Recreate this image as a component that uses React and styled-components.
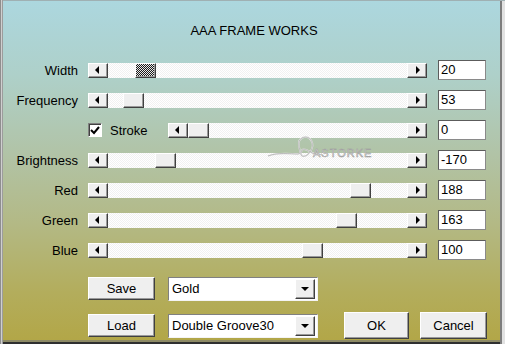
import React from "react";
import styled, { createGlobalStyle } from "styled-components";

const GlobalStyle = createGlobalStyle`
  html, body { margin: 0; padding: 0; }
  body {
    width: 505px;
    height: 344px;
    overflow: hidden;
    font-family: "Liberation Sans", Arial, sans-serif;
  }
`;

const Frame = styled.div`
  position: relative;
  box-sizing: border-box;
  width: 505px;
  height: 344px;
  padding: 1px 0 0 3px;
  font-size: 13px;
  color: #000;
  background: linear-gradient(
    180deg,
    #acd7df 0%,
    #aed0c9 22%,
    #b1c3a6 45%,
    #b3b985 65%,
    #b3ad5c 85%,
    #b2a646 100%
  );
  box-shadow: inset 1px 0 0 #8e8e8e, inset 2px 0 0 #cfcfcf, inset 3px 0 0 #9c9c9c,
    inset 0 1px 0 #9fb0b3, inset -3px 0 0 #e2e2e2, inset -5px 0 0 #7d7d7d,
    inset 0 -2px 0 #2f2f2f, inset 0 -4px 0 #8d8a66;
`;

const Title = styled.div`
  height: 54px;
  box-sizing: border-box;
  padding-top: 22px;
  line-height: 15px;
  text-align: center;
`;

const Row = styled.div`
  display: flex;
  align-items: center;
  height: 30px;
`;

const Label = styled.div`
  width: 75px;
  margin-right: 10px;
  text-align: right;
  line-height: 15px;
`;

const raised = `
  box-sizing: border-box;
  background: #efefef;
  border-top: 1px solid #ffffff;
  border-left: 1px solid #ffffff;
  border-right: 1px solid #404040;
  border-bottom: 1px solid #404040;
  box-shadow: inset -1px -1px 0 #9a9a9a;
`;

const SliderBox = styled.div`
  position: relative;
  display: flex;
  width: ${(p) => p.$width}px;
  height: 15px;
`;

const ArrowButton = styled.div`
  ${raised}
  width: 20px;
  height: 15px;
  display: flex;
  align-items: center;
  justify-content: center;

  &::before {
    content: "";
    width: 0;
    height: 0;
    border-top: 4px solid transparent;
    border-bottom: 4px solid transparent;
    ${(p) =>
      p.$dir === "left"
        ? "border-right: 4px solid #000; margin-right: 2px;"
        : "border-left: 4px solid #000; margin-left: 2px;"}
  }
`;

const Track = styled.div`
  flex: 1;
  height: 15px;
  background: repeating-conic-gradient(#f1f1f1 0 25%, #ffffff 0 50%) 0 0 / 2px 2px;
`;

const Thumb = styled.div`
  ${raised}
  position: absolute;
  top: 0;
  width: 21px;
  height: 15px;
  ${(p) =>
    p.$focus &&
    `background: repeating-conic-gradient(#1a1a1a 0 25%, #e8e8e8 0 50%) 0 0 / 2px 2px;`}
`;

const ValueBox = styled.div`
  box-sizing: border-box;
  width: 48px;
  height: 20px;
  margin-left: 11px;
  padding-left: 2px;
  background: #fff;
  border: 1px solid #5c5c5c;
  border-right-color: #8a8a8a;
  border-bottom-color: #8a8a8a;
  line-height: 18px;
`;

const StrokeCell = styled.div`
  display: flex;
  align-items: center;
  width: 339px;
`;

const Check = styled.div`
  box-sizing: border-box;
  width: 14px;
  height: 14px;
  background: #fff;
  border-top: 1px solid #808080;
  border-left: 1px solid #808080;
  border-right: 1px solid #ffffff;
  border-bottom: 1px solid #ffffff;
  box-shadow: inset 1px 1px 0 #404040;
  display: flex;
  align-items: center;
  justify-content: center;
`;

const CheckText = styled.span`
  margin-left: 8px;
  line-height: 15px;
`;

const Push = styled.div`
  margin-left: auto;
`;

/* columns: Save/Load | gap | combo | gap | OK | gap | Cancel */
const Bottom = styled.div`
  display: grid;
  grid-template-columns: 67px 13px 150px 26px 65px 11px 67px;
  grid-template-rows: 25px 27px;
  row-gap: 11px;
  align-items: center;
  margin-top: 11px;
  padding-left: 85px;
`;

const Button = styled.div`
  ${raised}
  grid-column: ${(p) => p.$col};
  grid-row: ${(p) => p.$row};
  height: ${(p) => p.$h}px;
  display: flex;
  align-items: center;
  justify-content: center;
`;

const Combo = styled.div`
  box-sizing: border-box;
  grid-column: 3;
  grid-row: ${(p) => p.$row};
  height: 24px;
  display: flex;
  align-items: center;
  padding: 0 2px 0 3px;
  background: #fff;
  border-top: 1px solid #808080;
  border-left: 1px solid #808080;
  border-right: 1px solid #f4f4f4;
  border-bottom: 1px solid #f4f4f4;
`;

const ComboText = styled.span`
  flex: 1;
`;

const ComboButton = styled.div`
  ${raised}
  width: 20px;
  height: 20px;
  display: flex;
  align-items: center;
  justify-content: center;

  &::before {
    content: "";
    border-left: 4px solid transparent;
    border-right: 4px solid transparent;
    border-top: 4px solid #000;
  }
`;

const Watermark = styled.svg`
  position: absolute;
  left: 264px;
  top: 132px;
  pointer-events: none;
`;

const rows = [
  { label: "Width", value: "20", thumb: 47, focus: true },
  { label: "Frequency", value: "53", thumb: 35 },
  { label: "", value: "0", thumb: 20, stroke: true },
  { label: "Brightness", value: "-170", thumb: 67 },
  { label: "Red", value: "188", thumb: 262 },
  { label: "Green", value: "163", thumb: 248 },
  { label: "Blue", value: "100", thumb: 214 },
];

const flourish =
  "M4 24 C14 20 26 22 34 22 C40 22 30 10 38 6 C46 2 52 12 46 20 C42 26 34 26 38 18 C42 14 50 26 58 22";

function Slider({ width, thumb, focus }) {
  return (
    <SliderBox $width={width}>
      <ArrowButton $dir="left" />
      <Track />
      <ArrowButton $dir="right" />
      <Thumb $focus={focus} style={{ left: thumb }} />
    </SliderBox>
  );
}

export default function App() {
  return (
    <>
      <GlobalStyle />
      <Frame>
        <Title>AAA FRAME WORKS</Title>
        {rows.map((r) => (
          <Row key={r.label + r.value}>
            <Label>{r.label}</Label>
            {r.stroke ? (
              <StrokeCell>
                <Check>
                  <svg width="10" height="9" viewBox="0 0 10 9">
                    <path d="M1 4 L4 7 L9 1" stroke="#000" strokeWidth="2" fill="none" />
                  </svg>
                </Check>
                <CheckText>Stroke</CheckText>
                <Push>
                  <Slider width={259} thumb={r.thumb} />
                </Push>
              </StrokeCell>
            ) : (
              <Slider width={339} thumb={r.thumb} focus={r.focus} />
            )}
            <ValueBox>{r.value}</ValueBox>
          </Row>
        ))}
        <Bottom>
          <Button $col={1} $row={1} $h={23}>Save</Button>
          <Combo $row={1}>
            <ComboText>Gold</ComboText>
            <ComboButton />
          </Combo>
          <Button $col={1} $row={2} $h={23}>Load</Button>
          <Combo $row={2}>
            <ComboText>Double Groove30</ComboText>
            <ComboButton />
          </Combo>
          <Button $col={5} $row={2} $h={27}>OK</Button>
          <Button $col={7} $row={2} $h={27}>Cancel</Button>
        </Bottom>
        <Watermark width="120" height="36" viewBox="0 0 120 36">
          <path d={flourish} stroke="#e6e6e6" strokeWidth="1.6" fill="none" />
          <path d={flourish} stroke="#a0a0a0" strokeWidth="0.6" fill="none" />
          <text
            x="49"
            y="25"
            fontFamily="Liberation Sans, Arial, sans-serif"
            fontSize="11"
            letterSpacing="1"
            fill="#e4e4e4"
            stroke="#999999"
            strokeWidth="0.5"
          >
            ASTORKE
          </text>
        </Watermark>
      </Frame>
    </>
  );
}
